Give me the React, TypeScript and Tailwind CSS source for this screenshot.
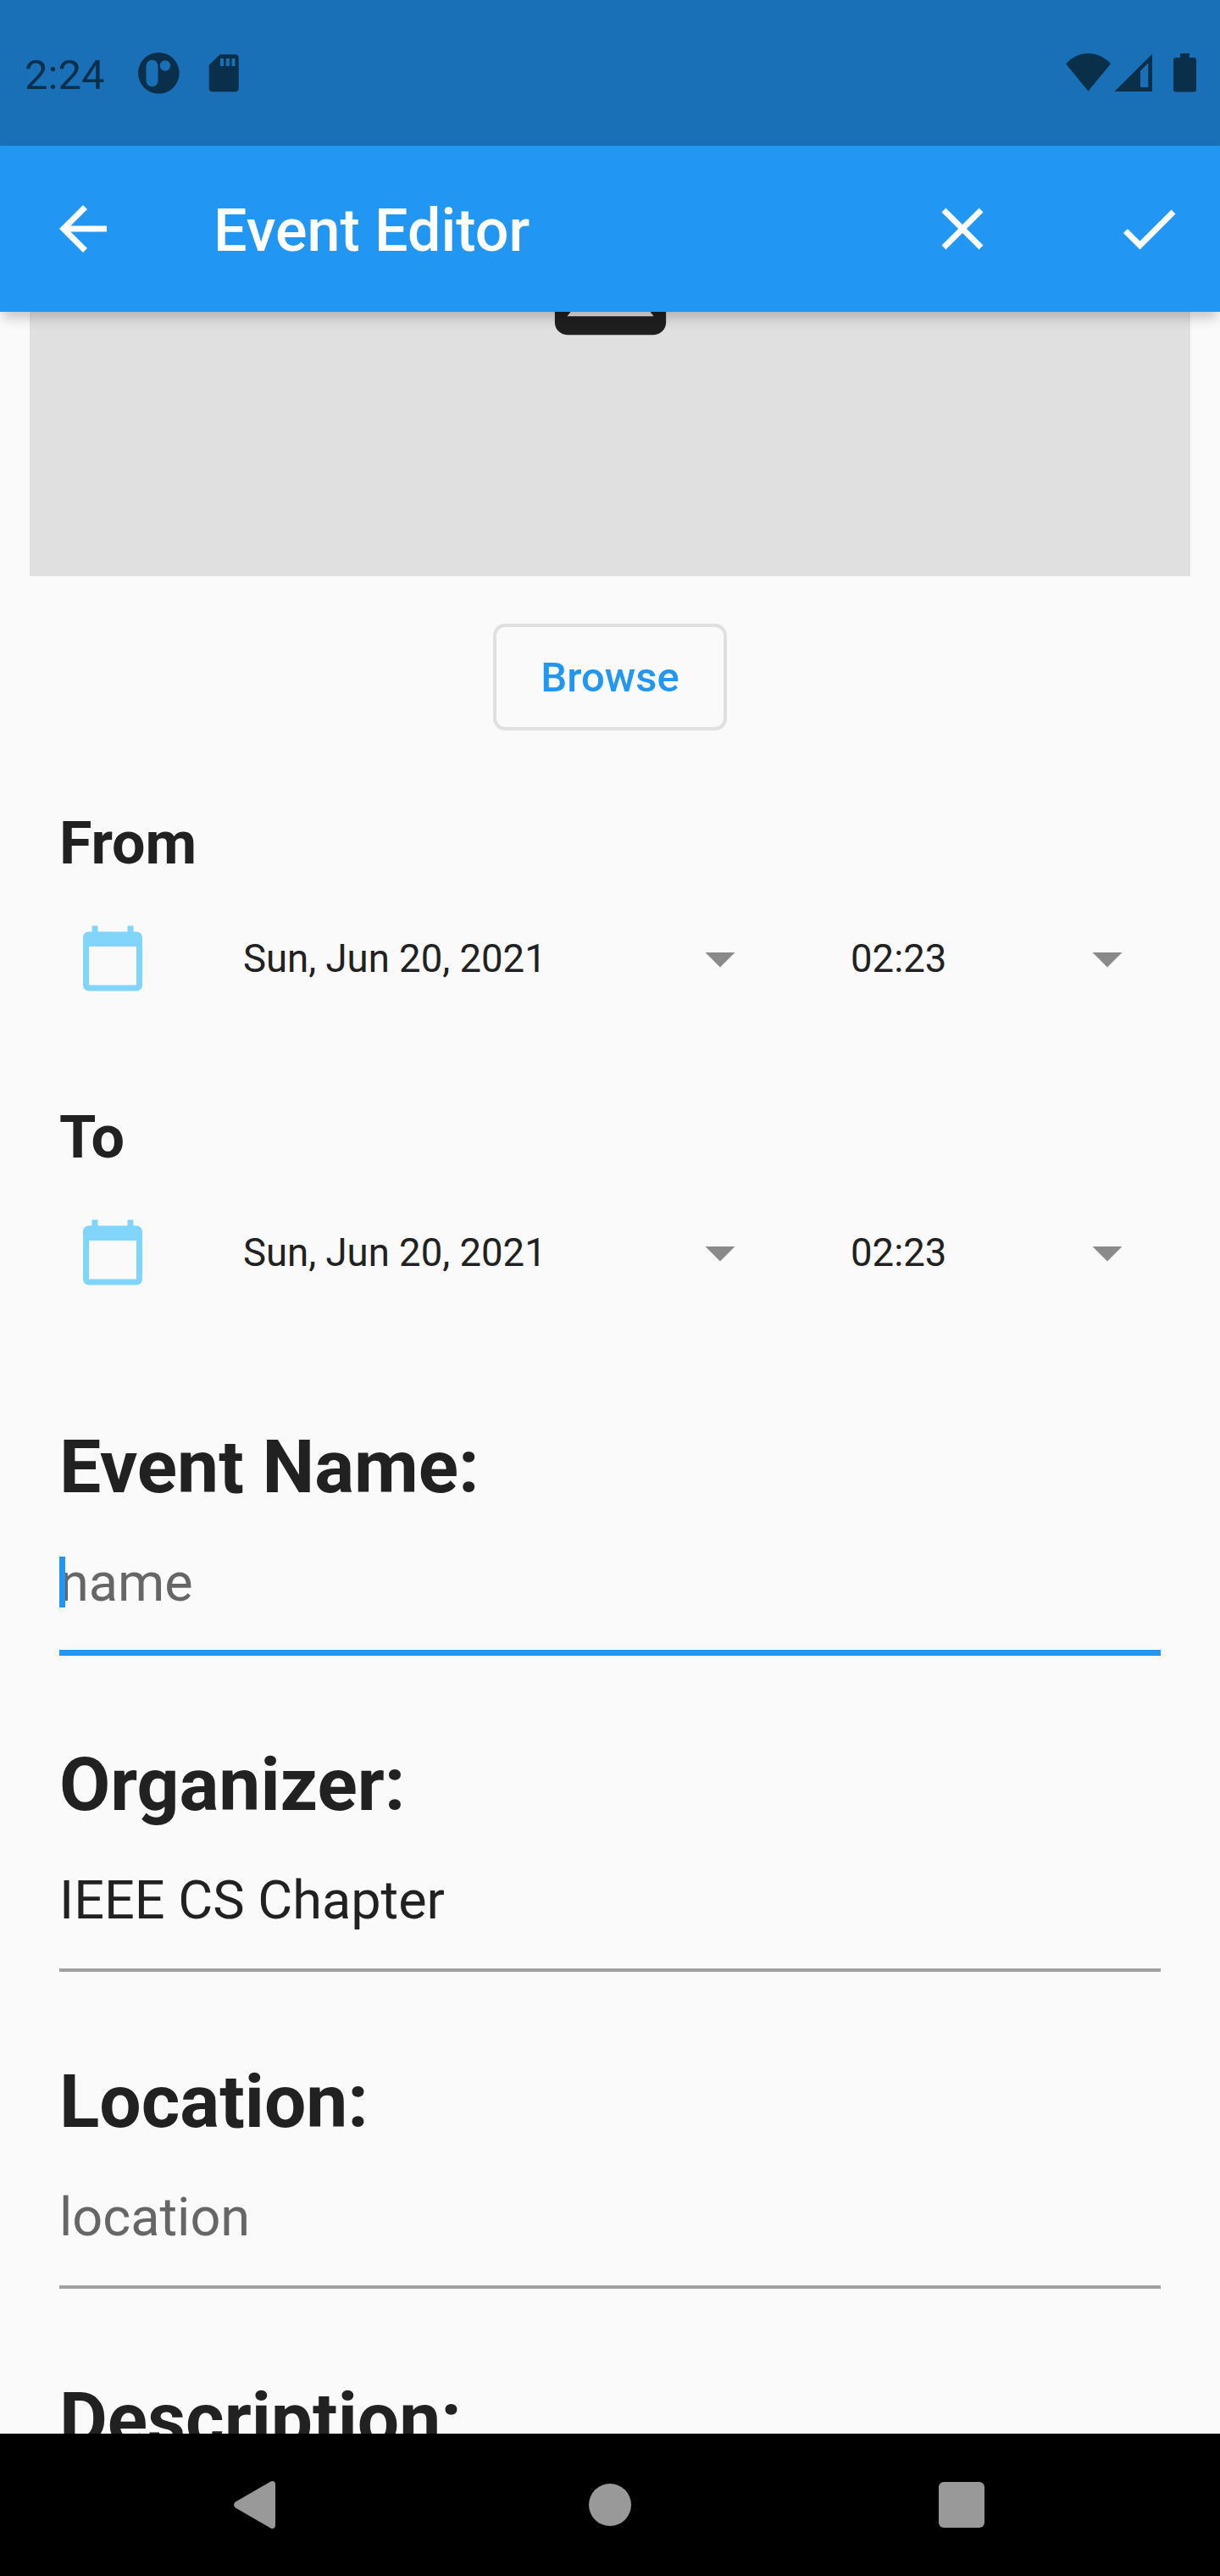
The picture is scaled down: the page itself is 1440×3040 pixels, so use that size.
import React from "react";

type IconProps = { d: string; className: string };

function Icon({ d, className }: IconProps) {
  return (
    <svg viewBox="0 0 24 24" fill="currentColor" className={className}>
      <path d={d} />
    </svg>
  );
}

const ARROW_BACK = "M20 11H7.83l5.59-5.59L12 4l-8 8 8 8 1.41-1.41L7.83 13H20v-2z";
const CLOSE =
  "M19 6.41L17.59 5 12 10.59 6.41 5 5 6.41 10.59 12 5 17.59 6.41 19 12 13.41 17.59 19 19 17.59 13.41 12z";
const CHECK = "M9 16.17L4.83 12l-1.42 1.41L9 19 21 7l-1.41-1.41z";
const PHOTO =
  "M21 19V5c0-1.1-.9-2-2-2H5c-1.1 0-2 .9-2 2v14c0 1.1.9 2 2 2h14c1.1 0 2-.9 2-2zM8.5 13.5l2.5 3.01L14.5 12l4.5 6H5l3.5-4.5z";
const CALENDAR =
  "M20 3h-1V1h-2v2H7V1H5v2H4c-1.1 0-2 .9-2 2v16c0 1.1.9 2 2 2h16c1.1 0 2-.9 2-2V5c0-1.1-.9-2-2-2zm0 18H4V8h16v13z";
const DROP_DOWN = "M7 10l5 5 5-5z";

function StatusBar() {
  return (
    <div className="flex h-[172px] shrink-0 items-start bg-[#1a70b7] text-[#0a2f4a]">
      <span className="ml-[29px] mt-[60px] w-[134px] text-[49px] leading-[57px]">2:24</span>
      <svg viewBox="0 0 49 49" className="mt-[62px] h-[49px] w-[49px]">
        <path
          fill="currentColor"
          fillRule="evenodd"
          d="M24.3 0a24.3 24.3 0 1 0 0 48.6a24.3 24.3 0 0 0 0-48.6zM16.5 8.7a7 7 0 0 1 7 7v17.5a7 7 0 0 1-14 0V15.7a7 7 0 0 1 7-7zM31.9 9.3a6.2 6.2 0 1 1 0 12.4a6.2 6.2 0 0 1 0-12.4z"
        />
      </svg>
      <svg viewBox="0 0 36 45" className="ml-[34px] mt-[64px] h-[45px] w-[36px]">
        <path
          fill="currentColor"
          fillRule="evenodd"
          d="M13.5 .3H31.5Q35.7 .3 35.7 4.5V40Q35.7 44.3 31.5 44.3H5Q.7 44.3 .7 40V13zM14 5v9h4V5zM20.7 5v9h4.2V5zM27.5 5v9h4V5z"
        />
      </svg>
      <svg viewBox="0 0 54 45" className="ml-auto mt-[63px] h-[45px] w-[54px]">
        <path fill="currentColor" d="M0 12.3C15-4 38-4 53 12.3L26.5 44.5z" />
      </svg>
      <svg viewBox="0 0 45 45" className="ml-[3px] mt-[63px] h-[45px] w-[45px]">
        <path
          fill="currentColor"
          fillRule="evenodd"
          d="M45 .7V45H.3zM40.3 11.5L31 20.5V40H40.3z"
        />
      </svg>
      <svg viewBox="0 0 27 46" className="ml-[25px] mr-[28px] mt-[63px] h-[46px] w-[27px]">
        <path
          fill="currentColor"
          d="M8 0H19V5H24Q27 5 27 8V42.5Q27 45.5 24 45.5H3Q0 45.5 0 42.5V8Q0 5 3 5H8z"
        />
      </svg>
    </div>
  );
}

function AppBar() {
  return (
    <header className="relative z-10 flex h-[196px] shrink-0 items-center bg-[#2196f3] text-white shadow-[0_10px_14px_-3px_rgba(0,0,0,0.21)]">
      <Icon d={ARROW_BACK} className="ml-[56px] h-[84px] w-[84px]" />
      <h1 className="ml-[112px] pt-[4px] text-[70px] leading-[82px] font-medium">Event Editor</h1>
      <Icon d={CLOSE} className="ml-auto h-[84px] w-[84px]" />
      <Icon d={CHECK} className="ml-[136.5px] mr-[42px] h-[84px] w-[84px]" />
    </header>
  );
}

function DateTimeRow({ label, className }: { label: string; className: string }) {
  return (
    <section className={className}>
      <h2 className="text-[70px] leading-[82px] font-bold">{label}</h2>
      <div className="mt-[25px] flex h-[140px] items-center">
        <Icon d={CALENDAR} className="ml-[21px] h-[84px] w-[84px] text-[#81d4fa]" />
        <span className="ml-[112px] w-[521px] pt-[1px] text-[45.5px] leading-[53px]">
          Sun, Jun 20, 2021
        </span>
        <Icon d={DROP_DOWN} className="h-[84px] w-[84px] text-[#8a8a8a]" />
        <span className="ml-[112px] w-[261px] pt-[1px] text-[45.5px] leading-[53px]">02:23</span>
        <Icon d={DROP_DOWN} className="h-[84px] w-[84px] text-[#8a8a8a]" />
      </div>
    </section>
  );
}

type FieldProps = { label: string; value?: string; hint?: string; focused?: boolean };

function Field({ label, value, hint, focused }: FieldProps) {
  return (
    <div className="h-[374.67px] shrink-0">
      <h2 className="text-[87.5px] leading-[102px] font-bold">{label}</h2>
      <div
        className={
          focused
            ? "relative mt-[49px] h-[123px] border-b-[7px] border-[#2196f3]"
            : "relative mt-[49px] h-[121px] border-b-[4px] border-[#a0a0a0]"
        }
      >
        <p className={value ? "text-[63px] leading-[73px]" : "text-[63px] leading-[73px] text-[#666666]"}>
          {value ?? hint}
        </p>
        {focused && <span className="absolute top-[6px] left-0 h-[60px] w-[7px] bg-[#2196f3]" />}
      </div>
    </div>
  );
}

function NavBar() {
  return (
    <nav className="flex h-[168px] shrink-0 items-center bg-black text-[#999999]">
      <svg viewBox="0 0 49 56" className="ml-[276px] h-[56px] w-[49px]">
        <path
          fill="currentColor"
          d="M43.5 .6Q45.5-.5 47.5 .6Q49 1.6 49 4V52Q49 54.4 47.5 55.4Q45.5 56.5 43.5 55.4L1.5 31.3Q-1.3 28 1.5 24.7z"
        />
      </svg>
      <span className="ml-[370px] h-[50px] w-[50px] rounded-full bg-[#999999]" />
      <span className="ml-[363px] h-[54px] w-[54px] rounded-[6px] bg-[#999999]" />
    </nav>
  );
}

export default function App() {
  return (
    <div className="flex h-[3040px] w-[1440px] flex-col overflow-hidden bg-[#fafafa] font-['Roboto',sans-serif] text-[#212121]">
      <StatusBar />
      <AppBar />
      <main className="flex h-[2504px] shrink-0 flex-col overflow-hidden">
        <div className="mx-[35px] flex h-[312px] shrink-0 justify-center overflow-hidden bg-[#e0e0e0]">
          <Icon d={PHOTO} className="-mt-[126px] h-[175px] w-[175px] text-[#1f1f1f]" />
        </div>
        <button className="mx-auto mt-[56px] flex h-[126px] w-[276px] shrink-0 items-center justify-center rounded-[14px] border-[4px] border-[#e0e0e0] pt-[1px] text-[49px] leading-[57px] font-medium text-[#2196f3]">
          Browse
        </button>
        <div className="mt-[92px] flex flex-col px-[70px]">
          <DateTimeRow label="From" className="h-[347px] shrink-0" />
          <DateTimeRow label="To" className="h-[379px] shrink-0" />
          <Field label="Event Name:" hint="name" focused />
          <Field label="Organizer:" value="IEEE CS Chapter" />
          <Field label="Location:" hint="location" />
          <Field label="Description:" />
        </div>
      </main>
      <NavBar />
    </div>
  );
}
